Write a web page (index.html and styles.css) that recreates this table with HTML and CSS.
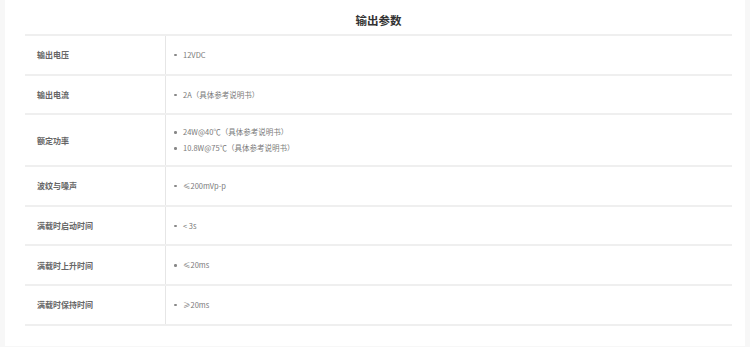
FILE: index.html
```html
<!DOCTYPE html>
<html lang="zh">
<head>
<meta charset="utf-8">
<link rel="stylesheet" href="styles.css">
</head>
<body>
<div class="card">
  <h2 class="title">输出参数</h2>
  <div class="table">
    <div class="row"><div class="label">输出电压</div><div class="value"><ul><li>12VDC</li></ul></div></div>
    <div class="row"><div class="label">输出电流</div><div class="value"><ul><li>2A（具体参考说明书）</li></ul></div></div>
    <div class="row tall"><div class="label">额定功率</div><div class="value"><ul><li>24W@40℃（具体参考说明书）</li><li>10.8W@75℃（具体参考说明书）</li></ul></div></div>
    <div class="row"><div class="label">波纹与噪声</div><div class="value"><ul><li>≤200mVp-p</li></ul></div></div>
    <div class="row"><div class="label">满载时启动时间</div><div class="value"><ul><li>&lt; 3s</li></ul></div></div>
    <div class="row"><div class="label">满载时上升时间</div><div class="value"><ul><li>≤20ms</li></ul></div></div>
    <div class="row"><div class="label">满载时保持时间</div><div class="value"><ul><li>≥20ms</li></ul></div></div>
  </div>
</div>
</body>
</html>
```
FILE: styles.css
```css
html, body {
  margin: 0;
  padding: 0;
}
body {
  background: #f7f7f7;
  font-family: "Noto Sans CJK SC", "Noto Sans", sans-serif;
  width: 750px;
  height: 347px;
}
.card {
  background: #fff;
  margin: 0 5px 0 5px;
  height: 346px;
  padding: 0 13px 0 20px;
  box-sizing: border-box;
}
.title {
  margin: 0;
  height: 35px;
  line-height: 40px;
  text-align: center;
  font-size: 11.5px;
  font-weight: 700;
  color: #333;
}
.table {
  border-top: 2px solid #efefef;
  margin-top: -1px;
}
.row {
  display: grid;
  grid-template-columns: 141px 1fr;
  height: 37.7px;
  border-bottom: 2px solid #efefef;
}
.row.tall {
  height: 49.7px;
}
.label {
  display: flex;
  align-items: center;
  padding-left: 12px;
  font-size: 8px;
  font-weight: 700;
  color: #666;
  border-right: 1px solid #e6e6e6;
}
.value {
  display: flex;
  align-items: center;
  padding-left: 7px;
}
.value ul {
  list-style: none;
  margin: 0;
  padding: 0;
}
.value li {
  position: relative;
  padding-left: 10px;
  font-size: 7.5px;
  line-height: 16px;
  color: #7a7a7a;
}
.value li::before {
  content: "";
  position: absolute;
  left: 1px;
  top: 7px;
  width: 2.5px;
  height: 2.5px;
  border-radius: 50%;
  background: #888;
}
```
